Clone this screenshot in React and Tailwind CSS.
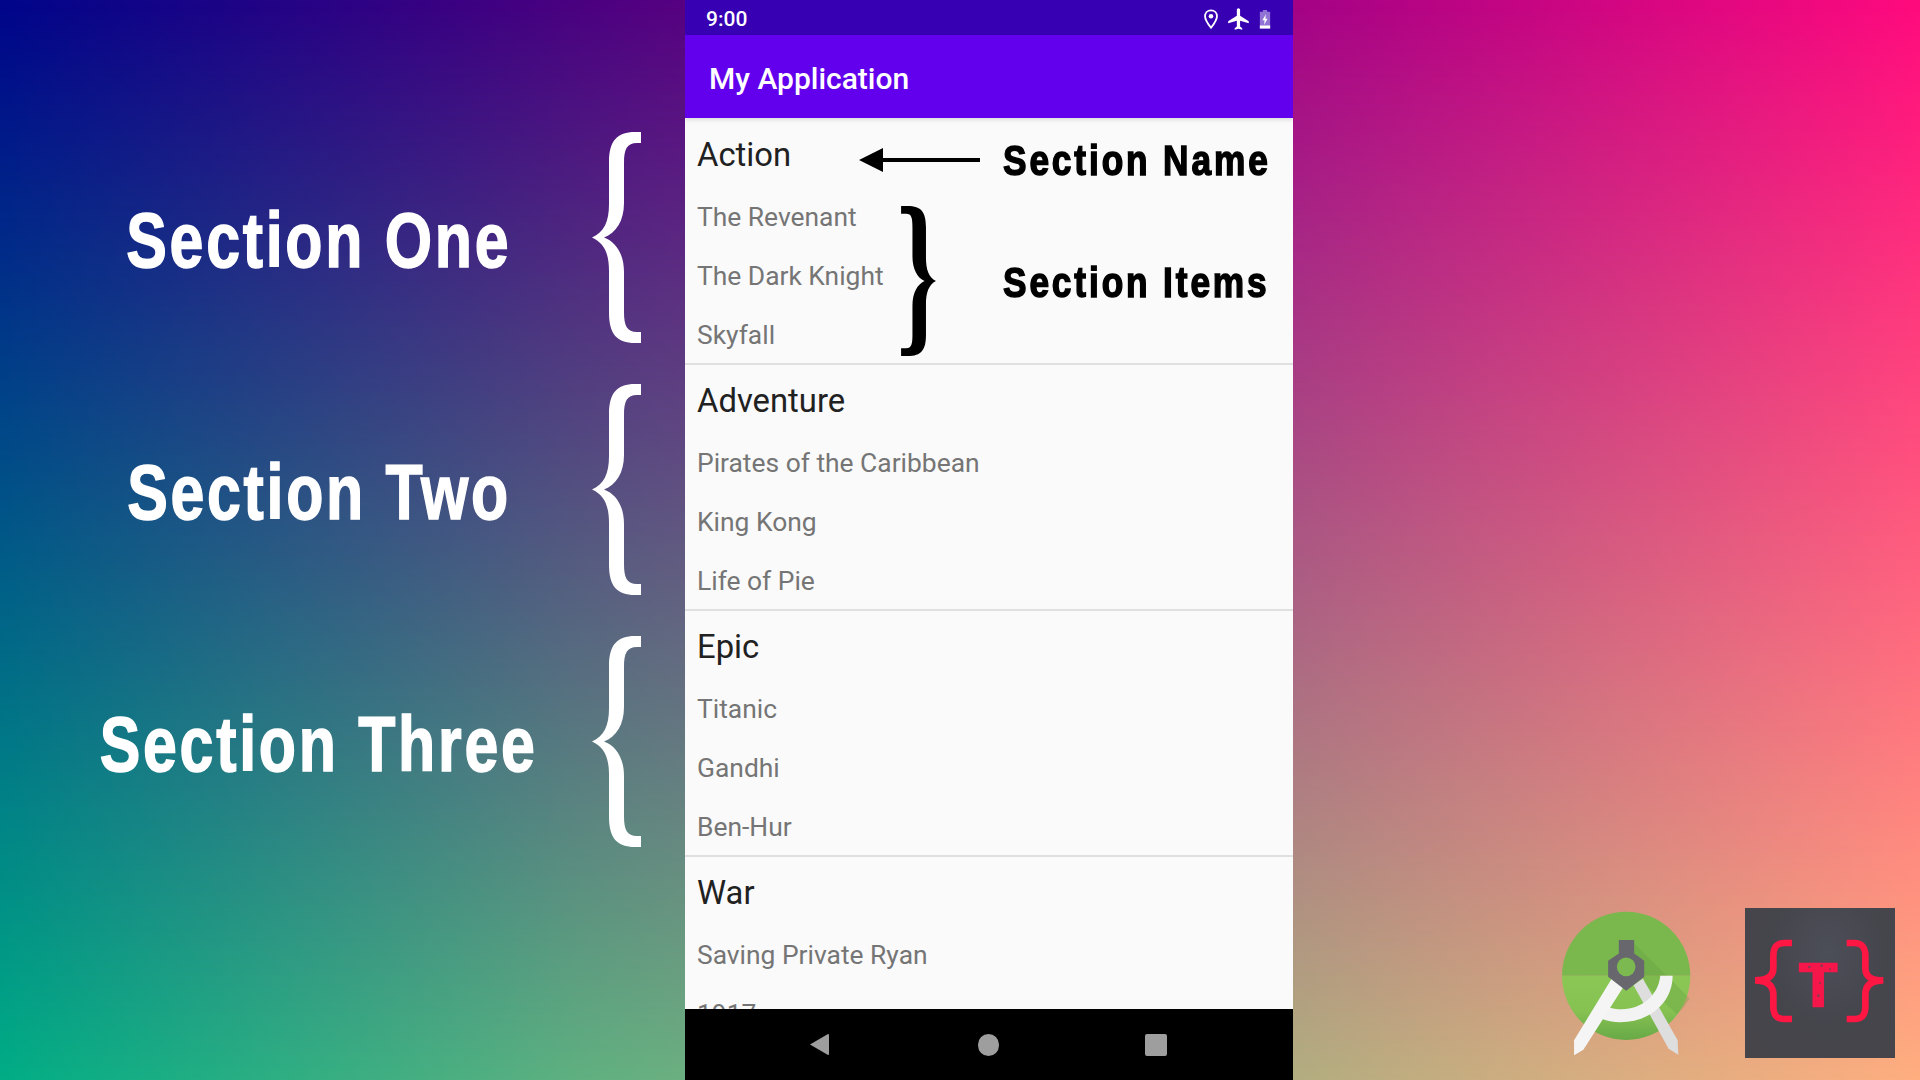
import React from "react";

const sections = [
  { name: "Action", items: ["The Revenant", "The Dark Knight", "Skyfall"] },
  { name: "Adventure", items: ["Pirates of the Caribbean", "King Kong", "Life of Pie"] },
  { name: "Epic", items: ["Titanic", "Gandhi", "Ben-Hur"] },
  { name: "War", items: ["Saving Private Ryan", "1917", "Dunkirk"] },
];

function Brace({ className, color = "#ffffff" }) {
  return (
    <svg viewBox="0 0 49 211" className={className}>
      <path
        d="M49 0 H43 C25 0 17 9 17 30 V72 C17 90 12 100 0 105.500 C12 111 17 121 17 139 V181 C17 202 25 211 43 211 H49 V200 H45 C35 200 32 194 32 180 V140 C32 122 24 110 12 105.500 C24 101 32 89 32 71 V31 C32 17 35 11 45 11 H49 Z"
        fill={color}
      />
    </svg>
  );
}

function SideRow({ label }) {
  return (
    <div className="h-[252px] flex items-center">
      <div className="w-[642px] flex items-center">
        <div className="w-[593px] pl-[45px] pt-[5px] flex justify-center text-white text-[78px] leading-none font-bold tracking-[3.500px] whitespace-nowrap font-['Liberation_Sans',sans-serif]">
          <span className="inline-block scale-x-[0.78] [-webkit-text-stroke:1.500px_#ffffff]">{label}</span>
        </div>
        <Brace className="w-[49px] h-[211px] shrink-0 -ml-[1px]" />
      </div>
    </div>
  );
}

function AndroidStudioLogo() {
  return (
    <svg viewBox="120 60 395 440" className="w-[132px] h-[147px]">
      <defs>
        <linearGradient id="lower" x1="0" y1="0" x2="0" y2="1">
          <stop offset="0" stopColor="#8bc755" />
          <stop offset="0.55" stopColor="#86c252" />
          <stop offset="1" stopColor="#68a947" />
        </linearGradient>
      </defs>
      <path d="M126 257 A192 192 0 0 1 510 257 Z" fill="#7ab84e" />
      <path d="M126 257 A192 192 0 0 0 510 257 Z" fill="url(#lower)" />
      <path d="M342 160 L440 257 L508 325 A192 192 0 0 1 470 372 L340 250 Z" fill="#5f9c3e" opacity="0.3" />
      <path d="M340 285 L368 265 L472 450 L474 493 L445 475 Z" fill="#dedede" />
      <path d="M457 257 C457 340 385 396 300 396 C280 396 260 392 240 384 L262 350 C275 355 290 357 305 357 C365 357 415 315 420 257 Z" fill="#f3f3f3" />
      <path d="M275 265 L310 290 L190 478 L162 495 L162 450 Z" fill="#f5f5f5" />
      <path d="M296 150 H342 V190 L372 212 V260 L318 302 L264 260 V212 L296 190 Z" fill="#67676d" />
      <circle cx="318" cy="230" r="28" fill="#7cb950" />
    </svg>
  );
}

function TLogo() {
  return (
    <div className="w-[150px] h-[150px] bg-[radial-gradient(ellipse_at_55%_30%,#4c4e58_0%,#45454c_50%,#474549_100%)]">
      <svg viewBox="675 55 450 450" className="w-full h-full">
        <path
          d="M816 160 H795 C768 160 760 175 760 200 V235 C760 258 745 272 705 272 C745 272 760 290 760 315 V350 C760 375 768 388 795 388 H816"
          fill="none"
          stroke="#ff1744"
          strokeWidth="20"
        />
        <path
          d="M980 160 H1001 C1028 160 1036 175 1036 200 V235 C1036 258 1050 272 1090 272 C1050 272 1036 290 1036 315 V350 C1036 375 1028 388 1001 388 H980"
          fill="none"
          stroke="#ff1744"
          strokeWidth="20"
        />
        <text x="895" y="350" textAnchor="middle" fontSize="184" fontWeight="700" fontFamily="'Liberation Sans', sans-serif" fill="#f5164a" stroke="#f5164a" strokeWidth="8">T</text>
        <g fill="#8a3a50">
          <circle cx="868" cy="232" r="4" />
          <circle cx="905" cy="228" r="4" />
          <circle cx="930" cy="238" r="3" />
          <circle cx="900" cy="280" r="3" />
          <circle cx="895" cy="318" r="4" />
        </g>
      </svg>
    </div>
  );
}

function StatusIcons() {
  return (
    <div className="flex items-center">
      <svg viewBox="0 0 24 24" className="w-[22px] h-[22px] mr-[4px]" fill="none">
        <path d="M12 2.500 C8 2.500 5.500 5.500 5.500 9 C5.500 13.500 12 21.500 12 21.500 C12 21.500 18.500 13.500 18.500 9 C18.500 5.500 16 2.500 12 2.500 Z" stroke="#fff" strokeWidth="2" />
        <circle cx="12" cy="9" r="2.500" fill="#fff" />
      </svg>
      <svg viewBox="0 0 24 24" className="w-[26px] h-[26px] mr-[7px]" fill="#fff">
        <path d="M21 16v-2l-8-5V3.500c0-.83-.67-1.500-1.500-1.500S10 2.670 10 3.500V9l-8 5v2l8-2.500V19l-2 1.500V22l3.500-1 3.500 1v-1.500L13 19v-5.500l8 2.500z" />
      </svg>
      <svg viewBox="0 0 14 24" className="w-[12px] h-[21px] mr-[1px]">
        <path d="M4.500 1 H9.500 V3 H13 V22.500 H1 V3 H4.500 Z" fill="#fff" opacity="0.45" />
        <rect x="1" y="19" width="12" height="3.500" fill="#fff" />
        <path d="M8 6 L4 13 H6.500 L6 18 L10 11 H7.500 Z" fill="#fff" />
      </svg>
    </div>
  );
}

function Phone() {
  const label = "text-[43px] leading-[50px] font-bold tracking-[3.500px] text-black whitespace-nowrap origin-left scale-x-[0.82] [-webkit-text-stroke:1.500px_#000000] font-['Liberation_Sans',sans-serif]";
  return (
    <div className="relative w-[608px] h-[1080px] shrink-0 flex flex-col overflow-hidden font-['Roboto',sans-serif] bg-[#fafafa]">
      <div className="h-[35px] shrink-0 bg-[#3700b3] flex items-center justify-between pl-[21px] pr-[21px] pt-[3px] text-white text-[21px] font-medium">
        <span className="mt-[2px]">9:00</span>
        <StatusIcons />
      </div>
      <div className="relative z-10 h-[83px] shrink-0 bg-[#6200ee] flex items-center pl-[24px] pt-[3px] text-white text-[30px] font-medium shadow-[0_2px_4px_rgba(0,0,0,0.12)]">
        My Application
      </div>
      <div className="flex-1 min-h-0 overflow-hidden pt-[1px]">
        {sections.map((s) => (
          <div key={s.name} className="h-[246px] border-b-2 border-[#e0e0e0] box-border pl-[12px] pt-[15px]">
            <div className="h-[44px] flex items-center text-[32.800px] text-[#212121]">{s.name}</div>
            <div className="mt-[10px]">
              {s.items.map((it) => (
                <div key={it} className="h-[59px] flex items-center text-[26.400px] text-[#757575]">{it}</div>
              ))}
            </div>
          </div>
        ))}
      </div>
      <div className="h-[71px] shrink-0 bg-black flex items-center">
        <svg viewBox="0 0 20 23" className="ml-[124px] w-[20px] h-[23px]">
          <path d="M1 11.500 L19 1 Q20 1 20 2 V21 Q20 22 19 22 Z" fill="#9e9e9e" />
        </svg>
        <div className="ml-[149px] w-[21px] h-[22px] rounded-full bg-[#9e9e9e]" />
        <div className="ml-[146px] w-[22px] h-[22px] rounded-[2px] bg-[#9e9e9e]" />
      </div>

      {/* annotations over the list */}
      <div className="absolute left-[174px] top-[148px] flex items-center">
        <svg viewBox="0 0 121 24" className="w-[121px] h-[24px]">
          <path d="M0 12 L24 0 V10 H121 V14 H24 V24 Z" fill="#000" />
        </svg>
      </div>
      <div className={`absolute left-[318px] top-[135px] ${label}`}>Section Name</div>
      <div className={`absolute left-[318px] top-[257px] ${label}`}>Section Items</div>
      <svg viewBox="0 0 49 211" className="absolute left-[215px] top-[206px] w-[37px] h-[150px] -scale-x-100">
        <path
          d="M49 0 H40 C20 0 14 9 14 30 V72 C14 90 10 100 0 105.500 C10 111 14 121 14 139 V181 C14 202 20 211 40 211 H49 V200 H42 C34 200 33 194 33 180 V140 C33 122 26 110 16 105.500 C26 101 33 89 33 71 V31 C33 17 34 11 42 11 H49 Z"
          fill="#000"
        />
      </svg>
    </div>
  );
}

export default function App() {
  return (
    <div className="relative w-[1920px] h-[1080px] overflow-hidden flex bg-[linear-gradient(90deg,#00058a_0%,#4a0080_30%,#8f0088_60%,#ff0a7d_100%)]">
      <div className="absolute inset-0 bg-[linear-gradient(90deg,#00ad85_0%,#5fb080_30%,#a0ad80_60%,#ffae80_100%)] [mask-image:linear-gradient(180deg,transparent_0%,black_100%)]" />
      <div className="relative w-[685px] shrink-0 flex flex-col pt-[111px]">
        <SideRow label="Section One" />
        <SideRow label="Section Two" />
        <SideRow label="Section Three" />
      </div>
      <div className="relative">
        <Phone />
      </div>
      <div className="relative flex-1 flex items-end justify-end pb-[22px] pr-[25px]">
        <div className="mr-[53px] mb-[1px]">
          <AndroidStudioLogo />
        </div>
        <TLogo />
      </div>
    </div>
  );
}
